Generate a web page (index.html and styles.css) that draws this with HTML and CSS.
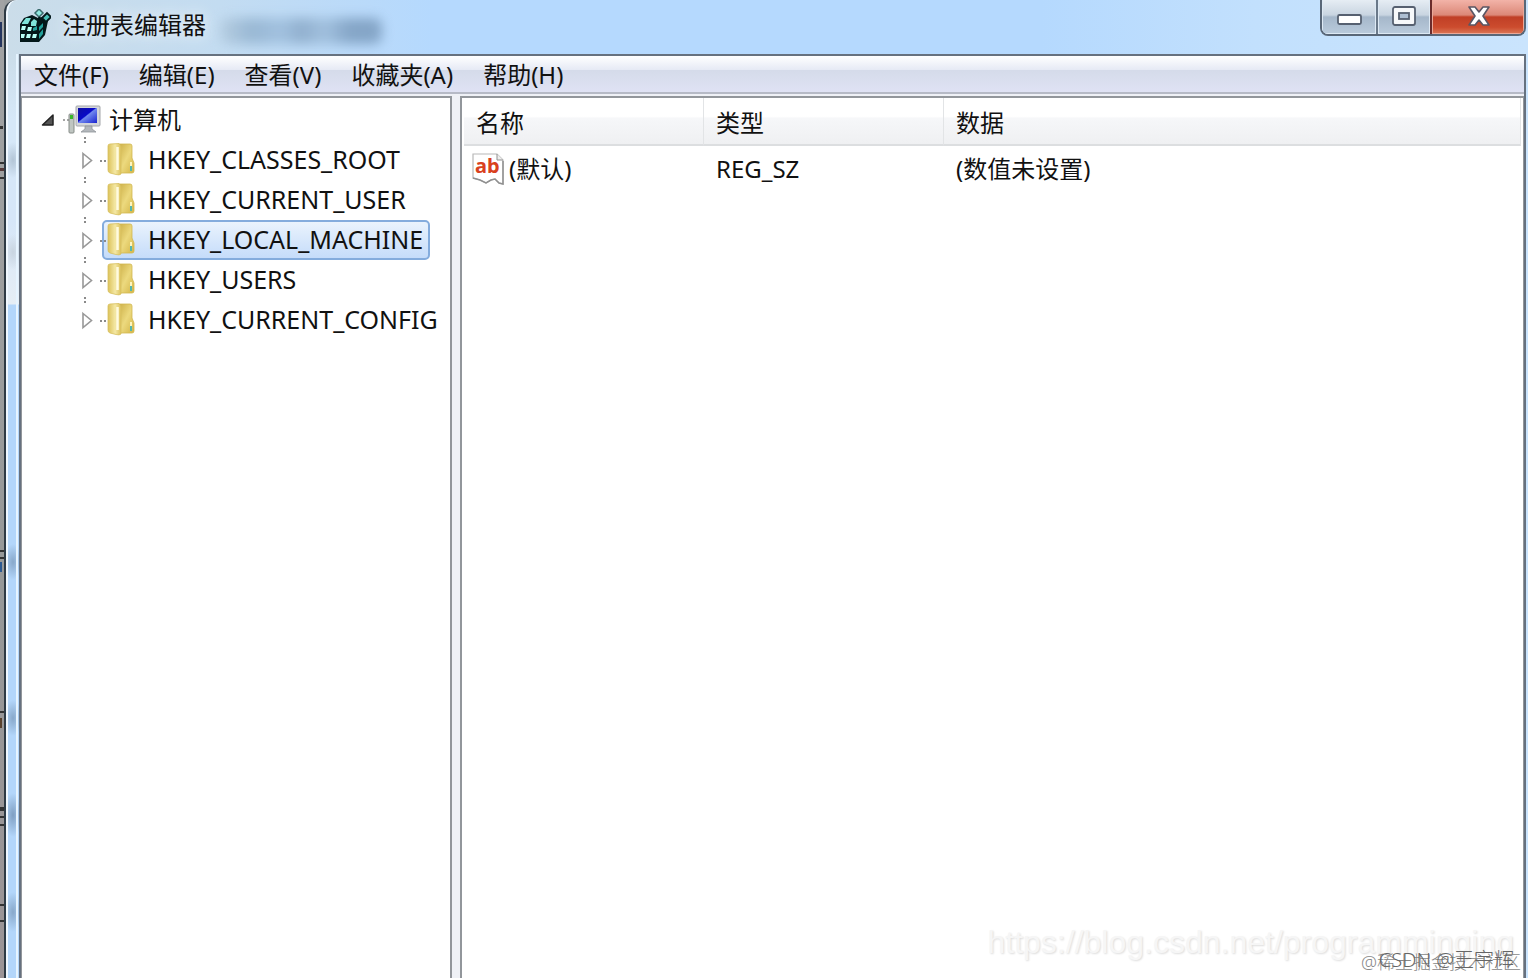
FILE: index.html
```
<!DOCTYPE html>
<html lang="zh-CN">
  <head>
    <meta charset="UTF-8" />
    <meta name="viewport" content="width=device-width, initial-scale=1.0" />
    <title>注册表编辑器</title>
    <link rel="stylesheet" href="styles.css">
  </head>
  <body>
    <svg width="0" height="0" class="defs" aria-hidden="true">
      <defs>
        <linearGradient id="flap" x1="0" x2="1" y1="0" y2="0">
          <stop offset="0" stop-color="#dcc25a" />
          <stop offset="0.55" stop-color="#f4e8a4" />
          <stop offset="1" stop-color="#dcc25c" />
        </linearGradient>
        <linearGradient id="back" x1="0" x2="1" y1="0" y2="1">
          <stop offset="0" stop-color="#cdb048" />
          <stop offset="0.5" stop-color="#ecd97e" />
          <stop offset="1" stop-color="#d4b546" />
        </linearGradient>
        <linearGradient id="screen" x1="0" x2="1" y1="0" y2="1">
          <stop offset="0" stop-color="#1010a0" />
          <stop offset="0.45" stop-color="#0808c8" />
          <stop offset="0.5" stop-color="#7088ee" />
          <stop offset="1" stop-color="#1822d0" />
        </linearGradient>
        <symbol id="folder" viewBox="0 0 28 34">
          <path d="M12 2H23Q25 2 25 4V16L27 21V29Q27 31 25 31H12z" fill="url(#back)" stroke="#d2b850" stroke-width="0.800" />
          <path d="M1 4Q1 2 3 2L12 1.500Q14 3 14 6V32Q12.500 33.500 9 32.500L3 31Q1 30.500 1 28z" fill="url(#flap)" stroke="#d8c060" stroke-width="0.800" />
          <path d="M10.500 5V28" stroke="#fffbe0" stroke-width="2.500" />
          <path d="M24 20V29" stroke="#fff5c0" stroke-width="2" />
          <path d="M24 24V29" stroke="#55b8b0" stroke-width="2" />
        </symbol>
        <symbol id="arrow" viewBox="0 0 22 22">
          <path d="M7 4.500L15.500 11.500L7 18.500z" fill="#fff" stroke="#989898" stroke-width="1.600" />
        </symbol>
      </defs>
    </svg>

    <div class="desktop"></div>
    <div class="window">
      <header class="titlebar">
        <svg class="app-icon" viewBox="0 0 32 34">
          <path d="M1 15L5 9L13 6L19 9L24 8L29 12L26 26L20 33H1z" fill="#04181a" />
          <path d="M3 14L7 9L12 9L9 15H3zM12 13L15 10L18 12L17 17H12z" fill="#7fe4da" />
          <path d="M3 17H7L6 21H2zM9 18H13L12 22H8zM2 25H6L5 29H2zM8 25H12L11 29H7zM14 25H18L17 29H13z" fill="#b8fff6" />
          <path d="M14 19L18 17V21L14 22zM20 18L24 14V18L20 22zM20 25L24 20V25L20 30z" fill="#23a09a" />
          <path d="M16 4L20 0L24 4L20 8z" fill="#8fe8e0" stroke="#3a6a6c" stroke-width="1.500" />
          <path d="M23 9L28 4L32 8L27 13z" fill="#49c0b8" stroke="#04181a" stroke-width="1.800" />
          <path d="M20 8L23 14" stroke="#04181a" stroke-width="2.500" />
        </svg>
        <h1 class="title">注册表编辑器</h1>
        <div class="ghost"></div>
        <div class="controls">
          <button class="control minimize" aria-label="最小化">
            <svg viewBox="0 0 26 24" width="26" height="24">
              <rect x="2" y="10" width="23" height="9" rx="1.500" fill="#fff" stroke="#566070" stroke-width="1.800" />
            </svg>
          </button>
          <button class="control maximize" aria-label="最大化">
            <svg viewBox="0 0 26 24" width="26" height="24">
              <rect x="2" y="2" width="22" height="18" rx="2" fill="#f6f8fa" stroke="#566070" stroke-width="1.800" />
              <rect x="8" y="8" width="10" height="6" fill="#aebfd2" stroke="#566070" stroke-width="1.800" />
            </svg>
          </button>
          <button class="control close" aria-label="关闭">
            <svg viewBox="0 0 26 24" width="26" height="24">
              <path d="M4 2H10L14 7L18 2H24L18 11L24 20H18L14 15L10 20H4L10 11z" fill="#fff" stroke="#5b5563" stroke-width="1.600" stroke-linejoin="round" />
            </svg>
          </button>
        </div>
      </header>

      <main class="client">
        <nav class="menubar">
          <a href="#">文件(F)</a>
          <a href="#">编辑(E)</a>
          <a href="#">查看(V)</a>
          <a href="#">收藏夹(A)</a>
          <a href="#">帮助(H)</a>
        </nav>

        <div class="panes">
          <aside class="tree-pane">
            <div class="root">
              <button class="toggle" aria-label="折叠">
                <svg viewBox="0 0 22 22" width="22" height="22">
                  <path d="M16 6V16H5.500z" fill="#555" stroke="#222" stroke-width="1.500" stroke-linejoin="round" />
                </svg>
              </button>
              <a href="#" class="root-label">
                <svg class="computer" viewBox="0 0 38 30">
                  <path d="M0 15H2M4 15H6" stroke="#888" stroke-width="1.500" />
                  <rect x="6" y="9" width="5" height="19" rx="1" fill="#c0c6c2" stroke="#868c88" />
                  <rect x="7" y="10" width="3" height="4" fill="#38b828" />
                  <rect x="13" y="1" width="24" height="20" rx="1" fill="#d4d6da" stroke="#a4a6aa" />
                  <rect x="15" y="3" width="19" height="15" fill="url(#screen)" />
                  <path d="M22 21H29V24L33 27H18L22 24z" fill="#b4b8bc" stroke="#90949a" stroke-width="0.800" />
                </svg>
                计算机
              </a>
            </div>
            <ul class="tree">
              <li>
                <button class="toggle" aria-label="展开"><svg width="22" height="22"><use href="#arrow" /></svg></button>
                <a href="#" class="key"><svg class="folder"><use href="#folder" /></svg>HKEY_CLASSES_ROOT</a>
              </li>
              <li>
                <button class="toggle" aria-label="展开"><svg width="22" height="22"><use href="#arrow" /></svg></button>
                <a href="#" class="key"><svg class="folder"><use href="#folder" /></svg>HKEY_CURRENT_USER</a>
              </li>
              <li>
                <button class="toggle" aria-label="展开"><svg width="22" height="22"><use href="#arrow" /></svg></button>
                <a href="#" class="key selected"><svg class="folder"><use href="#folder" /></svg>HKEY_LOCAL_MACHINE</a>
              </li>
              <li>
                <button class="toggle" aria-label="展开"><svg width="22" height="22"><use href="#arrow" /></svg></button>
                <a href="#" class="key"><svg class="folder"><use href="#folder" /></svg>HKEY_USERS</a>
              </li>
              <li>
                <button class="toggle" aria-label="展开"><svg width="22" height="22"><use href="#arrow" /></svg></button>
                <a href="#" class="key"><svg class="folder"><use href="#folder" /></svg>HKEY_CURRENT_CONFIG</a>
              </li>
            </ul>
          </aside>

          <section class="values-pane">
            <table class="values">
              <thead>
                <tr>
                  <th class="col">名称</th>
                  <th class="col">类型</th>
                  <th>数据</th>
                </tr>
              </thead>
              <tbody>
                <tr>
                  <td>
                    <div class="value-name">
                      <svg class="string-icon" viewBox="0 0 32 32">
                        <path d="M1 1H25L31 7V31L27 30L23 26L19 27L14 30L8 27L1 25z" fill="#fff" stroke="#b8b8b8" stroke-width="1.200" />
                        <path d="M1 25L8 27L14 30L19 27L23 26L27 30L31 31V8" fill="none" stroke="#909090" stroke-width="1.500" />
                        <path d="M25 1V7H31" fill="#eee" stroke="#909090" />
                        <text x="3" y="20" class="ab">ab</text>
                      </svg>
                      (默认)
                    </div>
                  </td>
                  <td>REG_SZ</td>
                  <td>(数值未设置)</td>
                </tr>
              </tbody>
            </table>
          </section>
        </div>
      </main>
    </div>

    <div class="watermark source">https://blog.csdn.net/programminging</div>
    <div class="watermark community">@稀土掘金技术社区</div>
    <div class="watermark author">CSDN @王宇辉</div>
  </body>
</html>
```

FILE: styles.css
```
* {
  margin: 0;
  padding: 0;
  box-sizing: border-box;
}

body {
  display: flex;
  position: relative;
  min-height: 100vh;
  overflow: hidden;
  background-color: #9da0a1;
  color: #111;
  font-family: "Noto Sans", "Noto Sans CJK SC", sans-serif;
  font-size: 24px;
  line-height: 32px;
}

a {
  color: inherit;
  text-decoration: none;
}

button {
  border: none;
  background: none;
  cursor: pointer;
}

svg {
  flex: none;
}

.defs {
  position: absolute;
}

/* sliver of the desktop behind the window */
.desktop {
  width: 4px;
  background:
    linear-gradient(#26365f, #26365f) 0 22px / 2px 25px no-repeat,
    linear-gradient(#333, #333) 0 126px / 3px 3px no-repeat,
    linear-gradient(#333, #333) 0 162px / 4px 2px no-repeat,
    linear-gradient(#553a3a, #553a3a) 0 168px / 4px 3px no-repeat,
    linear-gradient(#333, #333) 0 177px / 4px 2px no-repeat,
    linear-gradient(#333, #333) 0 550px / 4px 2px no-repeat,
    linear-gradient(#333, #333) 0 557px / 4px 2px no-repeat,
    linear-gradient(#2c5a92, #2c5a92) 0 562px / 2px 10px no-repeat,
    linear-gradient(#333, #333) 0 711px / 4px 2px no-repeat,
    linear-gradient(#59422e, #59422e) 0 718px / 2px 10px no-repeat,
    linear-gradient(#333, #333) 0 807px / 4px 4px no-repeat,
    linear-gradient(#333, #333) 0 816px / 4px 2px no-repeat,
    linear-gradient(#333, #333) 0 824px / 4px 2px no-repeat,
    linear-gradient(#333, #333) 0 904px / 4px 2px no-repeat,
    linear-gradient(#333, #333) 0 920px / 4px 2px no-repeat,
    linear-gradient(#a2a3a4, #969898 60%, #9b9496);
}

.window {
  display: flex;
  flex: 1;
  flex-direction: column;
  padding: 0 2px 0 13px;
  border-left: 2px solid #2e3a44;
  border-top-left-radius: 12px;
  box-shadow: inset 2px 0 #f0f8ff;
  background:
    linear-gradient(#e6f4ff, #e6f4ff) 10px 54px / 2px 100% no-repeat,
    radial-gradient(9px 18px at 7px 160px, #b3c5d6, transparent),
    radial-gradient(9px 18px at 7px 252px, #c8d4e0, transparent),
    radial-gradient(9px 18px at 7px 562px, #88a8ca, transparent),
    radial-gradient(9px 18px at 7px 718px, #88a8ca, transparent),
    radial-gradient(9px 22px at 7px 815px, #7f9fc2, transparent),
    radial-gradient(9px 20px at 7px 912px, #88a8ca, transparent),
    linear-gradient(#cbdde9, #d6e8f8 66px, #d6e6f8 166px, #e6eef5 250px, #b3d6fa 251px) 0 54px / 13px 100% no-repeat,
    linear-gradient(90deg, #cbdde9, #c3dcf1 14%, #b5d9fe 28%, #b5d9fe 68%, #c2e0fd 82%, #cae4fd);
}

.titlebar {
  display: flex;
  align-items: flex-start;
  height: 54px;
}

.app-icon {
  width: 32px;
  height: 34px;
  margin-top: 9px;
}

.title {
  margin: 9px 0 0 11px;
  font-size: 24px;
  font-weight: normal;
  text-shadow: 0 0 12px #e4eef6, 0 0 16px #e4eef6;
}

/* blurred caption seen through the glass */
.ghost {
  width: 162px;
  height: 26px;
  margin: 18px 0 0 14px;
  border-radius: 8px;
  background: linear-gradient(90deg, #b4cbde, #8fafcc 20%, #9bbbda 38%, #86a5c4 50%, #9bbad8 65%, #7899bb 80%, #7899bb);
  filter: blur(6px);
  opacity: 0.8;
}

.controls {
  display: flex;
  height: 36px;
  margin-left: auto;
  border: 2px solid #596778;
  border-top: none;
  border-radius: 0 0 8px 8px;
  overflow: hidden;
}

.control {
  display: flex;
  align-items: center;
  justify-content: center;
  width: 54px;
  background: linear-gradient(#e6edf4, #c9d5e1 44%, #a5b7ca 50%, #bacbdc);
  box-shadow: inset 0 -1px #dde9f4, inset 1px 0 #dde9f4, inset -1px 0 #dde9f4;
}

.maximize {
  border-left: 2px solid #6a798a;
}

.close {
  width: 94px;
  border-left: 2px solid #6b2b2b;
  background: linear-gradient(#f2b3a8, #dc8878 44%, #c03f26 50%, #cc4c2e 80%, #dc7858);
  box-shadow: inset 0 -1px #eba898, inset 1px 0 #eba898, inset -1px 0 #eba898;
}

.client {
  display: flex;
  flex: 1;
  flex-direction: column;
  border: 2px solid #66717f;
  border-bottom: none;
  background-color: #eff1f6;
}

.menubar {
  display: flex;
  align-items: center;
  gap: 30px;
  height: 38px;
  padding: 2px 13px 0;
  border-bottom: 2px solid #b6bac6;
  background: linear-gradient(#fff, #e6eaf5 38%, #d5dbea 40%, #dfe2f4);
}

.panes {
  display: flex;
  flex: 1;
  gap: 8px;
  margin-top: 2px;
}

.tree-pane {
  width: 431px;
  padding-top: 2px;
  border: 2px solid #92969b;
  border-bottom: none;
  border-left-width: 1px;
  background-color: #fff;
}

.root,
.tree li {
  display: flex;
  align-items: center;
  height: 40px;
}

.root {
  padding-left: 15px;
}

.toggle {
  display: flex;
  width: 22px;
  height: 22px;
}

.root-label {
  display: flex;
  align-items: center;
  gap: 8px;
  margin-left: 4px;
}

.computer {
  width: 38px;
  height: 30px;
}

.tree {
  list-style: none;
}

.tree li {
  position: relative;
  padding-left: 54px;
}

.tree li::before {
  content: "";
  position: absolute;
  top: -3px;
  left: 62px;
  width: 2px;
  height: 6px;
  background: repeating-linear-gradient(#8a8a8a 0 2px, transparent 2px 4px);
}

.key {
  display: flex;
  position: relative;
  align-items: center;
  gap: 13px;
  height: 40px;
  margin-left: 4px;
  padding: 0 5px 2px 3px;
  border: 2px solid transparent;
  border-radius: 5px;
  font-size: 25px;
}

.key::before {
  content: "";
  position: absolute;
  top: 18px;
  left: -4px;
  width: 6px;
  height: 2px;
  background: repeating-linear-gradient(90deg, #8a8a8a 0 2px, transparent 2px 4px);
}

.selected {
  border-color: #84acdd;
  background: linear-gradient(#eaf3fd, #c5dcfa);
}

.folder {
  width: 28px;
  height: 34px;
}

.values-pane {
  flex: 1;
  padding: 0 2px;
  border: 2px solid #92969b;
  border-right-width: 1px;
  border-bottom: none;
  background-color: #fff;
}

.values {
  width: 100%;
  border-collapse: separate;
  border-spacing: 0;
  table-layout: fixed;
}

.values th {
  height: 48px;
  padding: 3px 0 0 12px;
  border-right: 1px solid #e2e4e6;
  border-bottom: 2px solid #dcdee0;
  background: linear-gradient(#fff 40%, #f6f7f9 44%, #eff0f2);
  font-weight: normal;
  text-align: left;
}

.values .col {
  width: 240px;
}

.values td {
  height: 46px;
  padding-left: 12px;
}

.values td:first-child {
  padding-left: 8px;
}

.value-name {
  display: flex;
  align-items: center;
  gap: 5px;
}

.string-icon {
  width: 32px;
  height: 32px;
}

.ab {
  fill: #d9411e;
  font-family: "Noto Sans", sans-serif;
  font-size: 20px;
  font-weight: bold;
}

.watermark {
  position: absolute;
  white-space: nowrap;
}

.source {
  right: 14px;
  bottom: 20px;
  color: #f6f6f6;
  font-family: "Liberation Sans", sans-serif;
  font-size: 32px;
  text-shadow: 1px 1px 2px #ddd;
}

.community {
  right: 7px;
  bottom: 0;
  color: #888;
  font-size: 18px;
  font-weight: 300;
}

.author {
  right: 14px;
  bottom: 2px;
  color: #666;
  font-size: 20px;
  font-weight: 300;
}
```
